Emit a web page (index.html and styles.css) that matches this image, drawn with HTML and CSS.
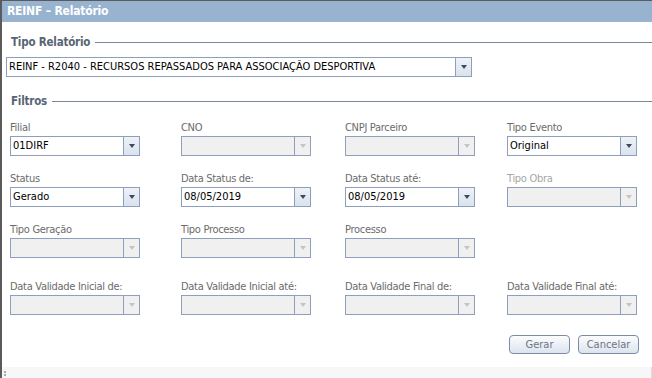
FILE: index.html
```html
<!DOCTYPE html>
<html lang="pt-BR">
<head>
    <meta charset="UTF-8">
    <title>REINF – Relatório</title>
    <link rel="stylesheet" href="styles.css">
</head>
<body>
    <div class="window">
        <div class="title-bar">REINF – Relatório</div>
        <div class="content">
            <div class="group first">
                <div class="legend"><span>Tipo Relatório</span></div>
                <div class="combo wide">
                    <span class="value">REINF - R2040 - RECURSOS REPASSADOS PARA ASSOCIAÇÃO DESPORTIVA</span>
                    <span class="arrow"></span>
                </div>
            </div>
            <div class="group">
                <div class="legend"><span>Filtros</span></div>
                <div class="grid">
                    <div class="field">
                        <label>Filial</label>
                        <div class="combo"><span class="value">01DIRF</span><span class="arrow"></span></div>
                    </div>
                    <div class="field">
                        <label>CNO</label>
                        <div class="combo disabled"><span class="value"></span><span class="arrow"></span></div>
                    </div>
                    <div class="field">
                        <label>CNPJ Parceiro</label>
                        <div class="combo disabled"><span class="value"></span><span class="arrow"></span></div>
                    </div>
                    <div class="field">
                        <label>Tipo Evento</label>
                        <div class="combo"><span class="value">Original</span><span class="arrow"></span></div>
                    </div>

                    <div class="field">
                        <label>Status</label>
                        <div class="combo"><span class="value">Gerado</span><span class="arrow"></span></div>
                    </div>
                    <div class="field">
                        <label>Data Status de:</label>
                        <div class="combo"><span class="value">08/05/2019</span><span class="arrow"></span></div>
                    </div>
                    <div class="field">
                        <label>Data Status até:</label>
                        <div class="combo"><span class="value">08/05/2019</span><span class="arrow"></span></div>
                    </div>
                    <div class="field">
                        <label class="off">Tipo Obra</label>
                        <div class="combo disabled"><span class="value"></span><span class="arrow"></span></div>
                    </div>

                    <div class="field">
                        <label>Tipo Geração</label>
                        <div class="combo disabled"><span class="value"></span><span class="arrow"></span></div>
                    </div>
                    <div class="field">
                        <label>Tipo Processo</label>
                        <div class="combo disabled"><span class="value"></span><span class="arrow"></span></div>
                    </div>
                    <div class="field">
                        <label>Processo</label>
                        <div class="combo disabled"><span class="value"></span><span class="arrow"></span></div>
                    </div>
                    <div class="field"></div>

                    <div class="field row4">
                        <label>Data Validade Inicial de:</label>
                        <div class="combo disabled"><span class="value"></span><span class="arrow"></span></div>
                    </div>
                    <div class="field row4">
                        <label>Data Validade Inicial até:</label>
                        <div class="combo disabled"><span class="value"></span><span class="arrow"></span></div>
                    </div>
                    <div class="field row4">
                        <label>Data Validade Final de:</label>
                        <div class="combo disabled"><span class="value"></span><span class="arrow"></span></div>
                    </div>
                    <div class="field row4">
                        <label>Data Validade Final até:</label>
                        <div class="combo disabled"><span class="value"></span><span class="arrow"></span></div>
                    </div>
                </div>
            </div>
            <div class="buttons">
                <button class="btn">Gerar</button>
                <button class="btn">Cancelar</button>
            </div>
        </div>
        <div class="status-bar"><span class="grip"></span></div>
    </div>
</body>
</html>
```

FILE: styles.css
```css
/* base */
html, body {
    margin: 0;
    padding: 0;
    height: 100%;
    overflow: hidden;
    font-family: Tahoma, "DejaVu Sans", sans-serif;
    font-size: 11px;
    background: #ffffff;
}

/* janela */
.window {
    height: 378px;
    display: flex;
    flex-direction: column;
    border-top: 1px solid #5b5b5b;
    border-left: 2px solid #5b5b5b;
    box-sizing: border-box;
}

.title-bar {
    height: 21px;
    line-height: 21px;
    background: #98b3d0;
    color: #ffffff;
    font-weight: bold;
    font-size: 12px;
    padding-left: 5px;
    font-family: "DejaVu Sans Condensed", "DejaVu Sans", sans-serif;
    letter-spacing: -0.2px;
}

.content {
    flex: 1;
    padding: 11px 13px 0 4px;
}

/* grupos */
.group.first {
    margin-bottom: 15px;
}

.legend {
    display: flex;
    align-items: center;
    gap: 5px;
    color: #586474;
    font-weight: bold;
    font-size: 11.5px;
    font-family: "DejaVu Sans Condensed", "DejaVu Sans", sans-serif;
    letter-spacing: -0.2px;
    padding-left: 5px;
    height: 18px;
    margin-bottom: 6px;
}

.legend::after {
    content: "";
    flex: 1;
    height: 1px;
    background: #7b889b;
    margin-right: -13px;
}

.group .legend + .grid {
    margin-top: 11px;
}

/* combobox */
.combo {
    display: flex;
    height: 20px;
    border: 1px solid #8d9fbc;
    box-sizing: border-box;
    background: #ffffff;
}

.combo.wide {
    width: 466px;
}

.combo .value {
    flex: 1;
    line-height: 18px;
    padding-left: 2px;
    color: #000000;
    white-space: nowrap;
    overflow: hidden;
    font-family: "DejaVu Sans Condensed", "DejaVu Sans", sans-serif;
    font-size: 11px;
}

.combo .arrow {
    width: 15px;
    border-left: 1px solid #8d9fbc;
    background: linear-gradient(to bottom, #eef2f8, #d9e2ee);
    display: flex;
    align-items: center;
    justify-content: center;
}

.combo .arrow::before {
    content: "";
    border-left: 3px solid transparent;
    border-right: 3px solid transparent;
    border-top: 4px solid #3e4a5a;
}

.combo.disabled {
    background: #f0f0f0;
}

.combo.disabled .arrow {
    background: #f0f0f0;
}

.combo.disabled .arrow::before {
    border-top-color: #c4c4c4;
}

/* filtros */
.grid {
    display: grid;
    grid-template-columns: 171px 164px 162px 131px;
    row-gap: 16px;
    padding-left: 4px;
}

.field label {
    display: block;
    color: #6b6b6b;
    height: 15px;
    line-height: 14px;
    font-family: "DejaVu Sans Condensed", "DejaVu Sans", sans-serif;
    letter-spacing: -0.3px;
}

.field label.off {
    color: #a6a6a6;
}

.field .combo {
    width: 130px;
}

.field.row4 {
    margin-top: 6px;
}

/* botoes */
.buttons {
    display: flex;
    justify-content: flex-end;
    gap: 8px;
    margin-top: 20px;
}

.btn {
    width: 61px;
    height: 19px;
    border: 1px solid #7d8ca6;
    border-radius: 4px;
    background: linear-gradient(to bottom, #fbfcfd, #dde4ee);
    color: #6a7585;
    font-family: "DejaVu Sans Condensed", "DejaVu Sans", sans-serif;
    font-size: 11px;
    padding: 0;
}

/* barra inferior */
.status-bar {
    height: 11px;
    background: #f7f7f7;
    border-right: 1px solid #dcdcdc;
    position: relative;
}

.grip {
    position: absolute;
    left: 2px;
    top: 4px;
    width: 2px;
    height: 2px;
    background: #a8a8a8;
    box-shadow: 0 3px 0 #a8a8a8;
}
```
